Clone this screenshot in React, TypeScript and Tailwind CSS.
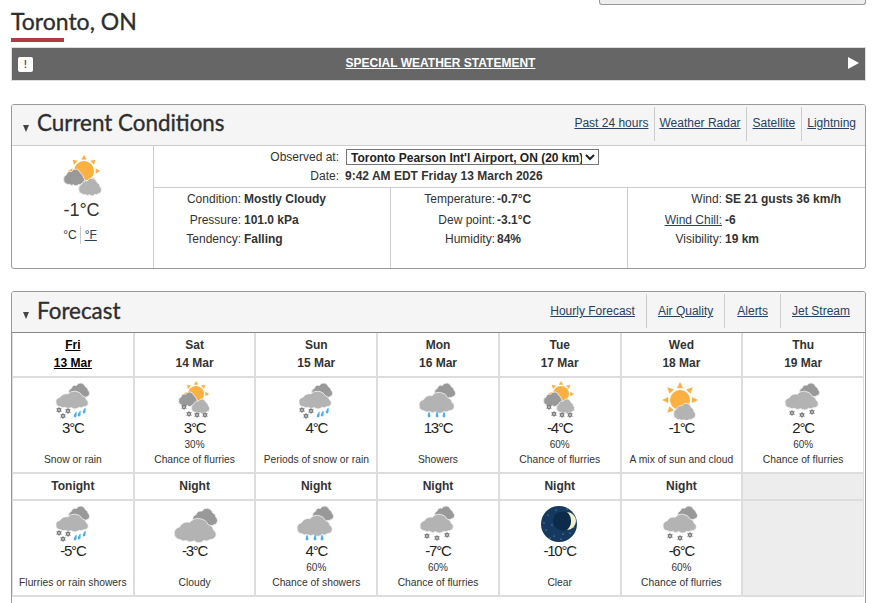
import React from "react";

const CLOUD =
  "M16 59 A15 15 0 0 1 3 44 A16 16 0 0 1 15 26 A19 19 0 0 1 38 14 A24 24 0 0 1 80 20 A16 16 0 0 1 92 34 A14 14 0 0 1 98 46 A14 14 0 0 1 84 59 A12 12 0 0 1 70 61 A14 14 0 0 1 48 62 A14 14 0 0 1 30 61 A12 12 0 0 1 16 59 Z";

function Cloud({ x, y, w, h, fill }: { x: number; y: number; w: number; h: number; fill: string }) {
  return (
    <path
      d={CLOUD}
      transform={`translate(${x} ${y}) scale(${w / 100} ${h / 60})`}
      fill={fill}
      stroke="#f4f4f4"
      strokeWidth={0.8}
      vectorEffect="non-scaling-stroke"
    />
  );
}

function Sun({ cx, cy, r, R }: { cx: number; cy: number; r: number; R: number }) {
  const rays = [0, 45, 90, 135, 180, 225, 270, 315];
  const a = r + R * 0.1;
  return (
    <g fill="#fcb040">
      <circle cx={cx} cy={cy} r={r} />
      {rays.map((d) => (
        <polygon
          key={d}
          transform={`rotate(${d} ${cx} ${cy})`}
          points={`${cx},${cy - R} ${cx - R * 0.17},${cy - a} ${cx + R * 0.17},${cy - a}`}
        />
      ))}
    </g>
  );
}

function Flake({ x, y }: { x: number; y: number }) {
  return (
    <g fill="none">
      {[0, 60, 120].map((d) => (
        <line key={d} x1={x} y1={y - 3} x2={x} y2={y + 3} stroke="#999" strokeWidth={0.9} transform={`rotate(${d} ${x} ${y})`} />
      ))}
      <circle cx={x} cy={y} r={1.6} stroke="#777" strokeWidth={1.1} fill="#c4c4c4" />
    </g>
  );
}

function Drop({ x, y, slant = 0 }: { x: number; y: number; slant?: number }) {
  return (
    <path
      d={`M${x + slant} ${y - 3.5} C${x + 1.8} ${y - 0.5} ${x + 1.8} ${y + 2.5} ${x} ${y + 2.5} C${x - 1.8} ${y + 2.5} ${x - 1.8} ${y - 0.5} ${x + slant} ${y - 3.5} Z`}
      fill="#4cb0f0"
    />
  );
}

const DARK = "#999999";
const LIGHT = "#b3b3b3";

function Icon({ kind }: { kind: string }) {
  let body: React.ReactNode = null;
  if (kind === "snowrain") {
    body = (
      <>
        <Cloud x={25} y={2} w={22} h={15} fill={DARK} />
        <Cloud x={12} y={10} w={34} h={17} fill={LIGHT} />
        <Flake x={16} y={30} />
        <Flake x={20} y={36} />
        <Flake x={25} y={31} />
        <Drop x={32} y={35} slant={1.5} />
        <Drop x={36} y={34} slant={1.5} />
        <Drop x={41} y={31} slant={1.5} />
      </>
    );
  } else if (kind === "sunsnow") {
    body = (
      <>
        <Sun cx={31} cy={14} r={8} R={13} />
        <Cloud x={13} y={11} w={20} h={14} fill={DARK} />
        <Cloud x={26} y={18} w={19} h={14} fill={LIGHT} />
        <Flake x={19} y={27} />
        <Flake x={24} y={34} />
        <Flake x={32} y={35} />
        <Flake x={40} y={35} />
      </>
    );
  } else if (kind === "showers") {
    body = (
      <>
        <Cloud x={26} y={2} w={22} h={15} fill={DARK} />
        <Cloud x={10} y={11} w={37} h={20} fill={LIGHT} />
        <Drop x={21} y={35} />
        <Drop x={29} y={35} />
        <Drop x={36} y={35} />
      </>
    );
  } else if (kind === "snow") {
    body = (
      <>
        <Cloud x={26} y={2} w={21} h={14} fill={DARK} />
        <Cloud x={11} y={10} w={35} h={18} fill={LIGHT} />
        <Flake x={19} y={33} />
        <Flake x={29} y={35} />
        <Flake x={39} y={32} />
      </>
    );
  } else if (kind === "mix") {
    body = (
      <>
        <Sun cx={29} cy={20} r={10} R={18} />
        <Cloud x={22} y={22} w={23} h={17} fill={LIGHT} />
      </>
    );
  } else if (kind === "cloudy") {
    body = (
      <>
        <Cloud x={27} y={4} w={26} h={18} fill={DARK} />
        <Cloud x={8} y={14} w={44} h={23} fill={LIGHT} />
      </>
    );
  } else if (kind === "moon") {
    const stars = [
      [18, 12], [22, 22], [16, 27], [24, 33], [31, 36], [40, 30], [44, 24], [37, 6], [26, 7], [14, 20], [33, 31], [20, 35],
    ];
    body = (
      <>
        <circle cx={29} cy={21} r={18} fill="#163a5f" />
        {stars.map(([x, y]) => (
          <circle key={`${x}-${y}`} cx={x} cy={y} r={0.5} fill="#b9cbdc" />
        ))}
        <circle cx={32.5} cy={18} r={9.5} fill="#0c2a49" />
        <path d="M37 9 A9 9 0 0 1 37 27 A12 12 0 0 0 37 9 Z" fill="#f3f1c8" />
      </>
    );
  }
  return (
    <svg width={60} height={40} viewBox="0 0 60 40" className="block shrink-0">
      {body}
    </svg>
  );
}

function CurrentIcon() {
  return (
    <svg width={60} height={42} viewBox="0 0 60 42" className="block">
      <Sun cx={31} cy={16} r={10} R={16} />
      <Cloud x={10} y={13} w={22} h={16} fill={DARK} />
      <Cloud x={25} y={22} w={24} h={17} fill={LIGHT} />
    </svg>
  );
}

function Temp({ v }: { v: string }) {
  return <div className="h-4 text-[15px] leading-4 tracking-[-1.2px] text-[#222]">{v}°C</div>;
}

type F = { icon: string; t: string; p?: string; s: string };

const days = [
  ["Fri", "13 Mar"], ["Sat", "14 Mar"], ["Sun", "15 Mar"], ["Mon", "16 Mar"], ["Tue", "17 Mar"], ["Wed", "18 Mar"], ["Thu", "19 Mar"],
];
const dayF: F[] = [
  { icon: "snowrain", t: "3", s: "Snow or rain" },
  { icon: "sunsnow", t: "3", p: "30%", s: "Chance of flurries" },
  { icon: "snowrain", t: "4", s: "Periods of snow or rain" },
  { icon: "showers", t: "13", s: "Showers" },
  { icon: "sunsnow", t: "-4", p: "60%", s: "Chance of flurries" },
  { icon: "mix", t: "-1", s: "A mix of sun and cloud" },
  { icon: "snow", t: "2", p: "60%", s: "Chance of flurries" },
];
const nights = ["Tonight", "Night", "Night", "Night", "Night", "Night"];
const nightF: F[] = [
  { icon: "snowrain", t: "-5", s: "Flurries or rain showers" },
  { icon: "cloudy", t: "-3", s: "Cloudy" },
  { icon: "showers", t: "4", p: "60%", s: "Chance of showers" },
  { icon: "snow", t: "-7", p: "60%", s: "Chance of flurries" },
  { icon: "moon", t: "-10", s: "Clear" },
  { icon: "snow", t: "-6", p: "60%", s: "Chance of flurries" },
];

function Fc({ f }: { f: F }) {
  return (
    <div className="bg-white flex flex-col items-center pt-[2px]">
      <Icon kind={f.icon} />
      <Temp v={f.t} />
      <div className="mt-[2px] h-[13px] text-[10px] leading-[13px] text-[#333]">{f.p ?? ""}</div>
      <div className="mt-[2px] h-[14px] text-[10.3px] leading-[14px] text-[#333] whitespace-nowrap">{f.s}</div>
    </div>
  );
}

function HeadLinks({ items, pb }: { items: { t: string; pl: number; pr: number }[]; pb: number }) {
  return (
    <div className="flex items-stretch pt-[2px] pb-[4px]">
      {items.map((it, i) => (
        <div
          key={it.t}
          style={{ paddingLeft: it.pl, paddingRight: it.pr, paddingBottom: pb }}
          className={`flex items-center text-[12px] ${i > 0 ? "border-l border-[#ccc]" : ""}`}
        >
          <a href="#" className="text-[#284162] underline whitespace-nowrap">{it.t}</a>
        </div>
      ))}
    </div>
  );
}

function Title({ t, mb }: { t: string; mb: number }) {
  return (
    <div className="flex items-center pl-[11px]">
      <span className="w-0 h-0 mt-[7px] mr-[8px] border-l-[3.5px] border-r-[3.5px] border-t-[7px] border-l-transparent border-r-transparent border-t-[#444]" />
      <h2 style={{ marginBottom: mb }} className="font-['Lato',sans-serif] text-[22.4px] leading-none text-[#2e2e2e] [-webkit-text-stroke:0.35px_#2e2e2e]">{t}</h2>
    </div>
  );
}

function Row({ w, label, value, mt, pl = 3 }: { w: number; label: React.ReactNode; value: string; mt: number; pl?: number }) {
  return (
    <div className="flex text-[12px] leading-[14px]" style={{ marginTop: mt }}>
      <div className="text-right text-[#333] shrink-0" style={{ width: w }}>{label}</div>
      <div className="font-bold text-[#333] whitespace-nowrap" style={{ paddingLeft: pl }}>{value}</div>
    </div>
  );
}

export default function App() {
  return (
    <div className="w-[873px] h-[603px] overflow-hidden bg-white font-['Liberation_Sans',Arial,sans-serif] text-[#333]">
      <div className="ml-[599px] w-[267px] h-[5px] bg-[#eeeeee] border border-t-0 border-[#999] rounded-b-[3px]" />
      <div className="ml-[11px] w-[855px]">
        <h1 className="h-[33px] pb-[1px] font-['Lato',sans-serif] text-[23px] leading-[32px] text-[#2e2e2e] [-webkit-text-stroke:0.35px_#2e2e2e]">Toronto, ON</h1>
        <div className="w-[53px] h-[4px] bg-[#af3c43]" />

        <div className="mt-[5px] h-[34px] flex items-center bg-[#666] border border-[#ddd] px-[6px] relative">
          <span className="w-[15px] h-[15px] bg-white rounded-[2px] flex items-center justify-center text-[10px] font-bold text-[#555]">!</span>
          <a href="#" className="flex-1 text-center pb-[2px] text-[12px] font-bold text-white underline">SPECIAL WEATHER STATEMENT</a>
          <span className="w-0 h-0 mb-[2px] border-y-[6.5px] border-l-[11px] border-y-transparent border-l-white" />
        </div>

        <section className="mt-[23px] h-[165px] border border-[#999] rounded-[3px] flex flex-col overflow-hidden">
          <header className="h-[41px] shrink-0 bg-[#f5f5f5] border-b border-[#ccc] flex justify-between">
            <Title t="Current Conditions" mb={3} />
            <HeadLinks
              pb={2}
              items={[
                { t: "Past 24 hours", pl: 6, pr: 6 },
                { t: "Weather Radar", pl: 4, pr: 5 },
                { t: "Satellite", pl: 6, pr: 6 },
                { t: "Lightning", pl: 5, pr: 9 },
              ]}
            />
          </header>
          <div className="flex flex-1">
            <div className="w-[142px] shrink-0 border-r border-[#ccc] flex flex-col items-center">
              <div className="mt-[9px]"><CurrentIcon /></div>
              <div className="mt-[2px] pr-[2px] h-[22px] text-[18px] leading-[22px] text-[#333]">-1°C</div>
              <div className="mt-[5px] pr-[5px] flex items-center text-[12px] leading-[18px]">
                <span className="pr-[3px]">°C</span>
                <span className="pl-[4px] border-l border-[#ccc]"><a href="#" className="text-[#284162] underline">°F</a></span>
              </div>
            </div>
            <div className="flex-1 flex flex-col">
              <div className="h-[42px] border-b border-[#ccc] shrink-0 pt-[3px]">
                <div className="flex items-center text-[12px] h-[16px]">
                  <div className="w-[185px] text-right shrink-0">Observed at:</div>
                  <select className="ml-[7px] w-[253px] h-[16px] border border-[#777] bg-white text-[12px] font-bold text-[#222] outline-none pl-0 pr-0">
                    <option>Toronto Pearson Int'l Airport, ON (20 km)</option>
                  </select>
                </div>
                <div className="flex items-center text-[12px] h-[14px] mt-[4px]">
                  <div className="w-[185px] text-right shrink-0">Date:</div>
                  <div className="ml-[6px] font-bold whitespace-nowrap">9:42 AM EDT Friday 13 March 2026</div>
                </div>
              </div>
              <div className="flex flex-1">
                <div className="w-[237px] border-r border-[#ccc] pt-[4px]">
                  <Row w={87} label="Condition:" value="Mostly Cloudy" mt={0} />
                  <Row w={87} label="Pressure:" value="101.0 kPa" mt={7} />
                  <Row w={87} label="Tendency:" value="Falling" mt={5} />
                </div>
                <div className="w-[237px] border-r border-[#ccc] pt-[4px]">
                  <Row w={104} label="Temperature:" value="-0.7°C" mt={0} pl={2} />
                  <Row w={104} label="Dew point:" value="-3.1°C" mt={7} pl={2} />
                  <Row w={104} label="Humidity:" value="84%" mt={5} pl={2} />
                </div>
                <div className="flex-1 pt-[4px]">
                  <Row w={94} label="Wind:" value="SE 21 gusts 36 km/h" mt={0} />
                  <Row w={94} label={<a href="#" className="text-[#284162] underline">Wind Chill:</a>} value="-6" mt={7} />
                  <Row w={94} label="Visibility:" value="19 km" mt={5} />
                </div>
              </div>
            </div>
          </div>
        </section>

        <section className="mt-[22px] h-[400px] border border-[#999] rounded-t-[3px] overflow-hidden">
          <header className="h-[41px] bg-[#f5f5f5] border-b border-[#888] flex justify-between">
            <Title t="Forecast" mb={1} />
            <HeadLinks
              pb={0}
              items={[
                { t: "Hourly Forecast", pl: 12, pr: 11 },
                { t: "Air Quality", pl: 11, pr: 11 },
                { t: "Alerts", pl: 12, pr: 12 },
                { t: "Jet Stream", pl: 11, pr: 15 },
              ]}
            />
          </header>
          <div className="mr-px bg-[#ddd] px-px pb-[2px] grid grid-cols-7 gap-[2px] grid-rows-[43px_94px_25px_94px]">
            {days.map(([d, m], i) => (
              <div key={d} className={`bg-white flex flex-col items-center justify-center pb-[2px] text-[12px] leading-[18px] font-bold text-[#333] ${i === 0 ? "text-black underline" : ""}`}>
                <div>{d}</div>
                <div>{m}</div>
              </div>
            ))}
            {dayF.map((f, i) => (
              <Fc key={i} f={f} />
            ))}
            {nights.map((n, i) => (
              <div key={i} className="bg-white flex items-center justify-center pb-[2px] text-[12px] font-bold text-[#333]">{n}</div>
            ))}
            <div className="bg-[#ededed]" />
            {nightF.map((f, i) => (
              <Fc key={i} f={f} />
            ))}
            <div className="bg-[#ededed]" />
          </div>
        </section>
      </div>
    </div>
  );
}
